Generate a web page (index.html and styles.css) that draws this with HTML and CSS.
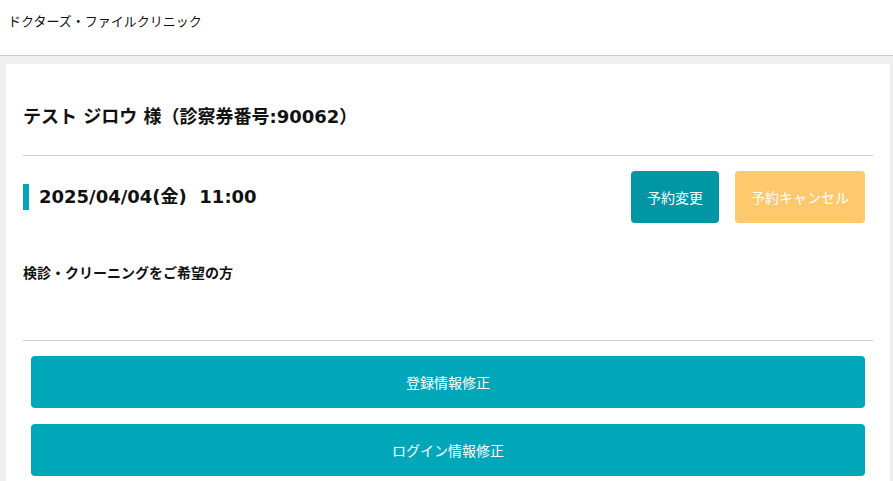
FILE: index.html
```html
<!DOCTYPE html>
<html lang="ja">
<head>
  <meta http-equiv="Content-type" content="text/html; charset=UTF-8">
  <meta name="viewport" content="width=device-width, initial-scale=1.0">
  <title>予約確認</title>
  <link rel="stylesheet" href="styles.css">
</head>
<body>
  <header class="site-header">
    <span class="site-name">ドクターズ・ファイルクリニック</span>
  </header>

  <main class="page">
    <section class="card">
      <h2 class="patient-name">テスト ジロウ 様（診察券番号:90062）</h2>
      <hr class="divider">

      <div class="reserve-row">
        <div class="reserve-date">2025/04/04(金)&nbsp; 11:00</div>
        <div class="reserve-actions">
          <button class="btn btn-change">予約変更</button>
          <button class="btn btn-cancel">予約キャンセル</button>
        </div>
      </div>

      <p class="reserve-menu">検診・クリーニングをご希望の方</p>
      <hr class="divider">

      <div class="account-actions">
        <button class="btn btn-wide">登録情報修正</button>
        <button class="btn btn-wide">ログイン情報修正</button>
      </div>
    </section>
  </main>
</body>
</html>
```

FILE: styles.css
```css
body {
  font-family: "DejaVu Sans", "Noto Sans CJK JP", sans-serif;
  margin: 0;
  padding: 0;
  background-color: #efefef;
  color: #111;
}

.site-header {
  background-color: #ffffff;
  height: 56px;
  border-bottom: 1px solid #cccccc;
  padding: 11px 0 0 8px;
  box-sizing: border-box;
}

.site-name {
  font-size: 13px;
  line-height: 18px;
}

.page {
  padding: 8px 3px 0 6px;
}

.card {
  background-color: #ffffff;
  padding: 40px 17px 20px;
}

.patient-name {
  margin: 0;
  font-size: 18px;
  line-height: 26px;
  font-weight: bold;
}

.divider {
  border: none;
  border-top: 1px solid #cccccc;
  margin: 25px 0 0;
}

.reserve-row {
  display: flex;
  justify-content: space-between;
  align-items: center;
  padding: 15px 8px 0 0;
}

.reserve-date {
  border-left: 6px solid #00a7b9;
  padding-left: 10px;
  font-size: 18px;
  line-height: 26px;
  font-weight: bold;
}

.reserve-actions {
  display: flex;
  gap: 16px;
}

.btn {
  font-family: "Noto Sans CJK JP", sans-serif;
  font-size: 14px;
  color: #ffffff;
  border: none;
  border-radius: 4px;
  height: 52px;
  cursor: pointer;
}

.btn-change {
  width: 88px;
  background-color: #0096a4;
}

.btn-cancel {
  width: 130px;
  background-color: #fec96d;
}

.reserve-menu {
  margin: 40px 0 0;
  font-size: 14px;
  line-height: 20px;
  font-weight: bold;
}

.reserve-menu + .divider {
  margin-top: 57px;
}

.account-actions {
  display: flex;
  flex-direction: column;
  gap: 16px;
  padding: 15px 8px 0;
}

.btn-wide {
  width: 100%;
  background-color: #00a7b9;
}
```
